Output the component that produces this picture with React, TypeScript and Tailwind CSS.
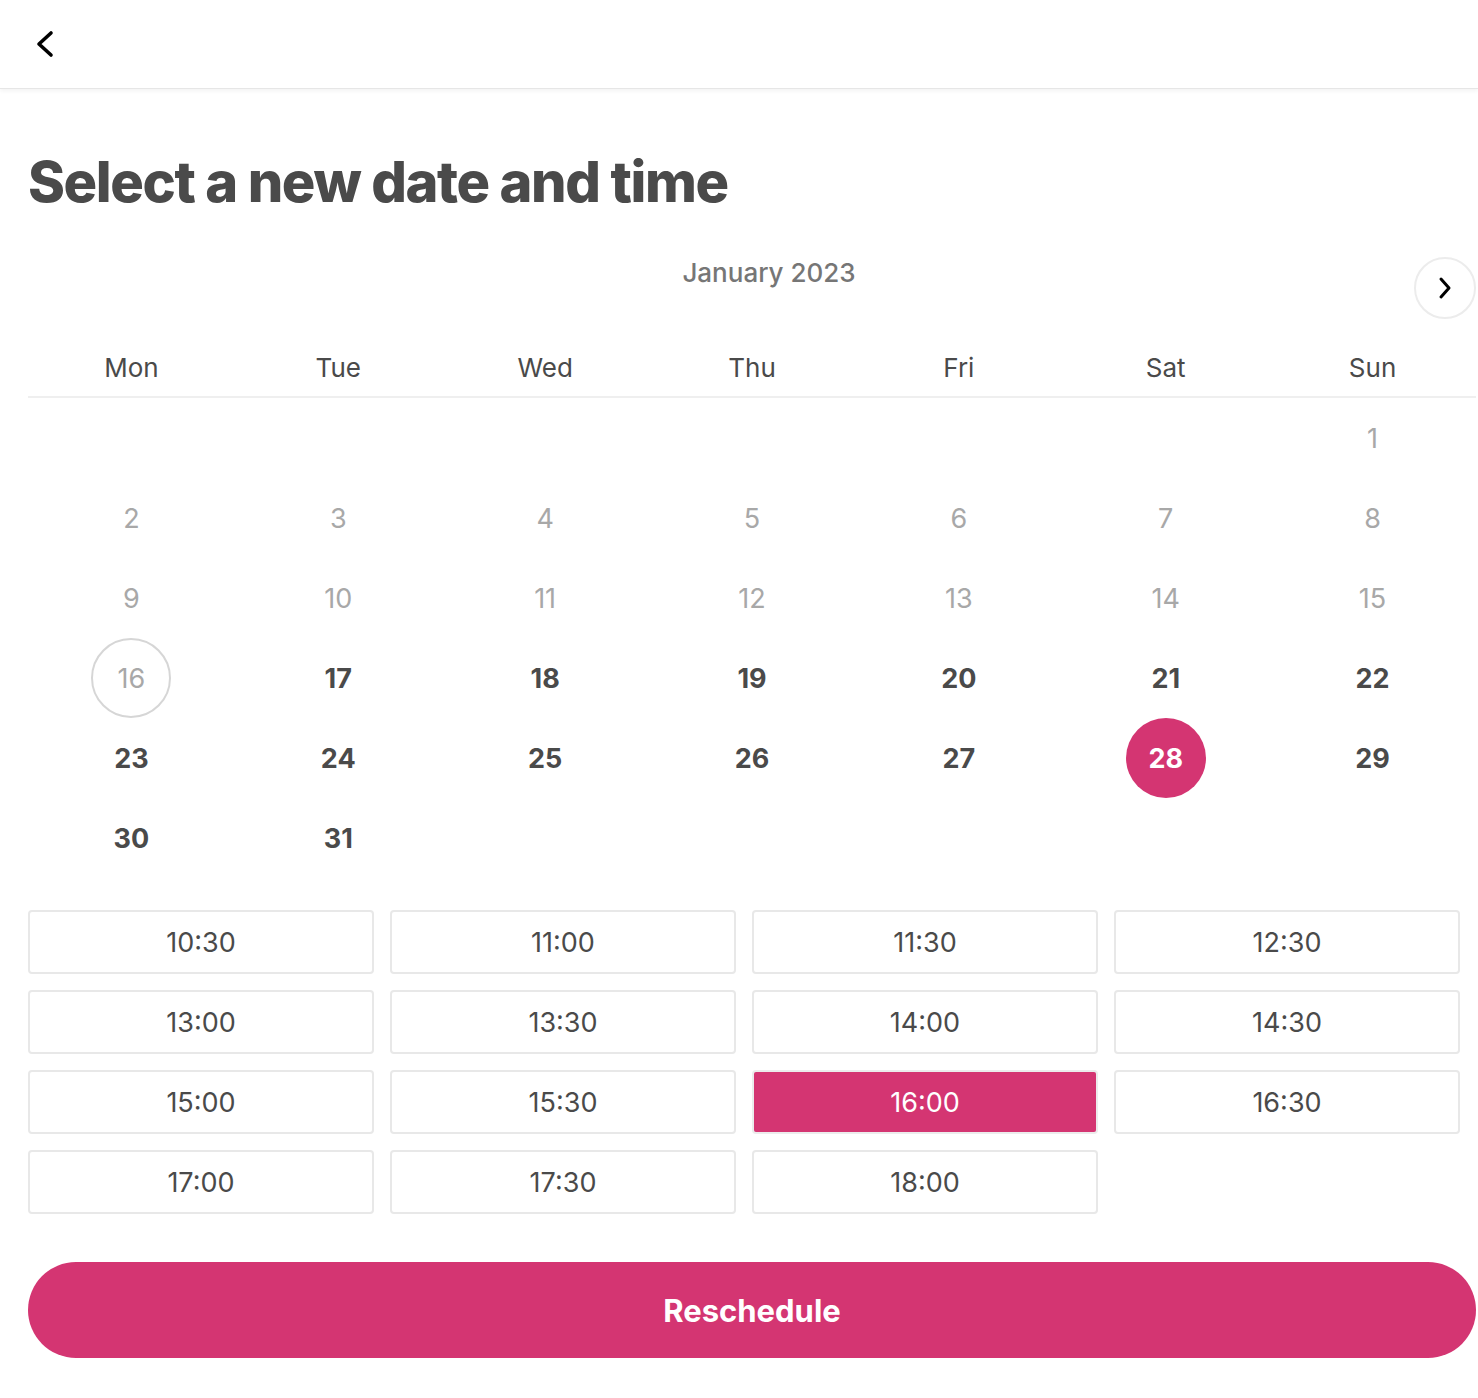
import React, { useState } from 'react';

const PINK = 'bg-[#d43572]';

const weekdays = ['Mon', 'Tue', 'Wed', 'Thu', 'Fri', 'Sat', 'Sun'];
const slots = ['10:30', '11:00', '11:30', '12:30', '13:00', '13:30', '14:00', '14:30', '15:00', '15:30', '16:00', '16:30', '17:00', '17:30', '18:00'];

// January 2023 starts on a Sunday
const cells: (number | null)[] = [...Array(6).fill(null), ...Array.from({ length: 31 }, (_, i) => i + 1)];

export default function App() {
  const [day, setDay] = useState(28);
  const [slot, setSlot] = useState('16:00');
  const today = 16;

  return (
    <div className="min-h-screen bg-white text-[#4a4a4a]" style={{ fontFamily: 'Inter, "Noto Sans", sans-serif' }}>
      <header className="h-[89px] border-b border-[#e6e6e6] shadow-[0_2px_4px_rgba(0,0,0,0.05)] flex items-center pl-[35px]">
        <button className="text-black">
          <svg viewBox="0 0 20 28" className="w-[20px] h-[28px]" fill="none" stroke="currentColor" strokeWidth={3.6} strokeLinecap="round" strokeLinejoin="round">
            <polyline points="16,3 4,14 16,25" />
          </svg>
        </button>
      </header>

      <main className="pl-[28px] pr-[2px]">
        <h1 className="mt-[65px] text-[56px] leading-none font-extrabold tracking-[-0.025em] text-[#4a4a4a]">Select a new date and time</h1>

        <div className="mt-[47px] flex items-start">
          <div className="flex-1 pl-[96px] pt-[3px] leading-[26px] text-center text-[26px] font-medium text-[#767676]">January 2023</div>
          <button className="w-[62px] h-[62px] rounded-full border-2 border-[#ececec] flex items-center justify-center text-black">
            <svg viewBox="0 0 14 24" className="w-[14px] h-[24px]" fill="none" stroke="currentColor" strokeWidth={3} strokeLinecap="round" strokeLinejoin="round">
              <polyline points="3,3 11,12 3,21" />
            </svg>
          </button>
        </div>

        <div className="grid grid-cols-7 border-b-2 border-[#efefef] pb-[9px] mt-[29px]">
          {weekdays.map(w => (
            <div key={w} className="text-center text-[26px] text-[#4a4a4a]">{w}</div>
          ))}
        </div>

        <div className="grid grid-cols-7">
          {cells.map((d, i) => {
            const past = d !== null && d < today;
            const selected = d === day;
            const isToday = d === today;
            return (
              <div key={i} className="h-[80px] flex items-center justify-center">
                {d !== null && (
                  <button
                    onClick={() => !past && !isToday && setDay(d)}
                    className={`w-[80px] h-[80px] pt-[2px] rounded-full flex items-center justify-center text-[27px] ${
                      selected
                        ? `${PINK} text-white font-bold`
                        : isToday
                        ? 'border-2 border-[#d6d6d6] text-[#a8a8a8]'
                        : past
                        ? 'text-[#a8a8a8]'
                        : 'font-bold text-[#4a4a4a]'
                    }`}
                  >
                    {d}
                  </button>
                )}
              </div>
            );
          })}
        </div>

        <div className="mt-[32px] w-[1432px] grid grid-cols-4 gap-[16px]">
          {slots.map(s => (
            <button
              key={s}
              onClick={() => setSlot(s)}
              className={`h-[64px] pt-[3px] rounded-[4px] border-2 text-[27px] flex items-center justify-center ${
                slot === s ? `${PINK} border-[#ececec] text-white` : 'bg-white border-[#e8e8e8] text-[#4a4a4a]'
              }`}
            >
              {s}
            </button>
          ))}
        </div>

        <button className={`mt-[48px] w-[1448px] h-[96px] pt-[3px] rounded-full ${PINK} text-white text-[31px] font-bold`}>Reschedule</button>
      </main>
    </div>
  );
}
